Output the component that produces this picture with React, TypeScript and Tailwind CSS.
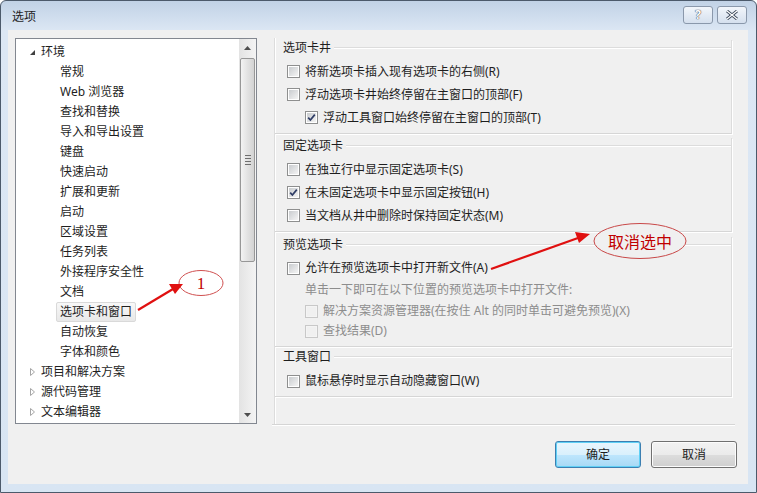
import React from "react";

const font = { fontFamily: '"Noto Sans", "Noto Sans CJK SC", sans-serif' };

type TreeItem = { label: string; level: 0 | 1; state?: "open" | "closed"; selected?: boolean };

const tree: TreeItem[] = [
  { label: "环境", level: 0, state: "open" },
  { label: "常规", level: 1 },
  { label: "Web 浏览器", level: 1 },
  { label: "查找和替换", level: 1 },
  { label: "导入和导出设置", level: 1 },
  { label: "键盘", level: 1 },
  { label: "快速启动", level: 1 },
  { label: "扩展和更新", level: 1 },
  { label: "启动", level: 1 },
  { label: "区域设置", level: 1 },
  { label: "任务列表", level: 1 },
  { label: "外接程序安全性", level: 1 },
  { label: "文档", level: 1 },
  { label: "选项卡和窗口", level: 1, selected: true },
  { label: "自动恢复", level: 1 },
  { label: "字体和颜色", level: 1 },
  { label: "项目和解决方案", level: 0, state: "closed" },
  { label: "源代码管理", level: 0, state: "closed" },
  { label: "文本编辑器", level: 0, state: "closed" },
];

const Expander = ({ state }: { state?: "open" | "closed" }) => {
  if (state === "open")
    return (
      <svg width="9" height="9" viewBox="0 0 9 9" className="shrink-0">
        <path d="M7 2 L7 7 L2 7 Z" fill="#404040" />
      </svg>
    );
  return (
    <svg width="9" height="10" viewBox="0 0 9 10" className="shrink-0">
      <path d="M2.5 1.5 L6.5 5 L2.5 8.5 Z" fill="#fff" stroke="#a6a6a6" />
    </svg>
  );
};

const Check = ({ checked, disabled }: { checked?: boolean; disabled?: boolean }) => (
  <span
    className={`relative flex h-[13px] w-[13px] shrink-0 items-center justify-center border ${
      disabled ? "border-[#c8c8c8] bg-[#f4f4f4]" : "border-[#8e8f8f] bg-white"
    }`}
  >
    <span
      className={`h-[9px] w-[9px] ${
        disabled ? "bg-[#f0f0f0]" : "bg-[linear-gradient(135deg,#c9cccf,#f4f4f4)]"
      }`}
    />
    {checked && (
      <svg width="11" height="11" viewBox="0 0 11 11" className="absolute left-[0px] top-[0px]">
        <path d="M2.2 5.6 L4.4 8 L8.8 2.6" fill="none" stroke="#2f3d66" strokeWidth="1.7" />
      </svg>
    )}
  </span>
);

const Option = ({
  label,
  checked,
  disabled,
  indent,
  h = "h-[23px]",
}: {
  label: string;
  checked?: boolean;
  disabled?: boolean;
  indent?: boolean;
  h?: string;
}) => (
  <div className={`flex items-center gap-[5px] ${h} ${indent ? "pl-[30px]" : "pl-[12px]"}`}>
    <Check checked={checked} disabled={disabled} />
    <span className={`text-[12px] ${disabled ? "text-[#8d8d8d]" : "text-[#1e1e1e]"}`}>{label}</span>
  </div>
);

const Group = ({
  title,
  className,
  children,
}: {
  title: string;
  className: string;
  children: React.ReactNode;
}) => (
  <div className={`mr-[3px] border-r border-b border-r-[#dcdcdc] border-b-[#d6d6d6] shadow-[1px_1px_0_#ffffff] ${className}`}>
    <div className="flex h-[16px] items-center">
      <span className="pl-[8px] pr-[3px] text-[12px] leading-[16px] text-[#1e1e1e]">{title}</span>
      <span className="h-[2px] flex-1 border-t border-b border-t-[#dcdcdc] border-b-white" />
    </div>
    {children}
  </div>
);

export default function App() {
  return (
    <div
      style={font}
      className="relative h-[493px] w-[757px] overflow-hidden rounded-t-[6px] border border-[#4c5a6b] bg-[linear-gradient(#c1d2e6,#dce7f4_30px,#d8e5f3)]"
    >
      {/* title bar */}
      <div className="flex h-[29px] items-center justify-between pl-[11px] pr-[9px]">
        <span className="pt-[2px] text-[12px] text-[#1e1e1e]">选项</span>
        <div className="mb-[2px] flex gap-[4px]">
          <div className="flex h-[18px] w-[30px] items-center justify-center rounded-[3px] border border-[#8a98ab] bg-[linear-gradient(#f2f6fb,#d5e0ee)] text-[12px] font-bold text-white [text-shadow:0_0_1px_#334,0_0_1px_#334]">
            ?
          </div>
          <div className="flex h-[18px] w-[30px] items-center justify-center rounded-[3px] border border-[#8a98ab] bg-[linear-gradient(#f2f6fb,#d5e0ee)]">
            <svg width="12" height="10" viewBox="0 0 12 10">
              <path d="M1 1 L11 9 M11 1 L1 9" stroke="#3d4a5c" strokeWidth="3" />
              <path d="M1 1 L11 9 M11 1 L1 9" stroke="#fff" strokeWidth="1.2" />
            </svg>
          </div>
        </div>
      </div>

      {/* client area */}
      <div className="ml-[7px] flex h-[454px] w-[740px] flex-col bg-[#f0f0f0]">
        <div className="flex h-[394px] pt-[8px]">
          {/* tree view */}
          <div className="ml-[7px] flex h-[386px] w-[242px] border border-[#828790] bg-white">
            <div className="flex-1 pt-[3px]">
              {tree.map((t) => (
                <div key={t.label} className="flex h-[20px] items-center">
                  {t.level === 0 ? (
                    <div className="flex items-center pl-[12px]">
                      <Expander state={t.state} />
                      <span className="pl-[4px] text-[12px] text-[#1e1e1e]">{t.label}</span>
                    </div>
                  ) : (
                    <div
                      className={`ml-[40px] flex h-[20px] items-center px-[3px] text-[12px] text-[#1e1e1e] ${
                        t.selected ? "rounded-[2px] border border-[#d9d9d9] bg-[linear-gradient(#f8f8f8,#e8e8e8)]" : "border border-transparent"
                      }`}
                    >
                      {t.label}
                    </div>
                  )}
                </div>
              ))}
            </div>
            {/* scrollbar */}
            <div className="flex w-[17px] flex-col bg-[linear-gradient(90deg,#e3e3e3,#f4f4f4)]">
              <div className="flex h-[17px] items-center justify-center">
                <svg width="7" height="4" viewBox="0 0 7 4">
                  <path d="M0 4 L3.5 0 L7 4 Z" fill="#4d4d4d" />
                </svg>
              </div>
              <div className="mx-[1px] mt-[2px] flex h-[204px] items-center justify-center rounded-[2px] border border-[#979797] bg-[linear-gradient(90deg,#f3f3f3,#e2e2e2_50%,#d3d3d3)]">
                <div className="flex flex-col gap-[2px]">
                  <span className="h-[1px] w-[6px] bg-[#6e6e6e]" />
                  <span className="h-[1px] w-[6px] bg-[#6e6e6e]" />
                  <span className="h-[1px] w-[6px] bg-[#6e6e6e]" />
                  <span className="h-[1px] w-[6px] bg-[#6e6e6e]" />
                </div>
              </div>
              <div className="flex-1" />
              <div className="flex h-[17px] items-center justify-center">
                <svg width="7" height="4" viewBox="0 0 7 4">
                  <path d="M0 0 L3.5 4 L7 0 Z" fill="#4d4d4d" />
                </svg>
              </div>
            </div>
          </div>

          {/* options panel */}
          <div className="ml-[17px] flex w-[461px] flex-col border-l border-l-[#dcdcdc] pt-[2px] shadow-[inset_1px_0_0_#ffffff]">
            <Group title="选项卡井" className="h-[94px]">
              <div className="pt-[4px]">
                <Option label="将新选项卡插入现有选项卡的右侧(R)" />
                <Option label="浮动选项卡井始终停留在主窗口的顶部(F)" />
                <Option label="浮动工具窗口始终停留在主窗口的顶部(T)" checked indent />
              </div>
            </Group>
            <Group title="固定选项卡" className="mt-[4px] h-[94px]">
              <div className="pt-[4px]">
                <Option label="在独立行中显示固定选项卡(S)" />
                <Option label="在未固定选项卡中显示固定按钮(H)" checked />
                <Option label="当文档从井中删除时保持固定状态(M)" />
              </div>
            </Group>
            <Group title="预览选项卡" className="mt-[5px] h-[110px]">
              <div className="pt-[4px]">
                <Option label="允许在预览选项卡中打开新文件(A)" h="h-[22px]" />
                <div className="flex h-[22px] items-center pl-[30px] text-[12px] text-[#8d8d8d]">
                  单击一下即可在以下位置的预览选项卡中打开文件:
                </div>
                <Option label="解决方案资源管理器(在按住 Alt 的同时单击可避免预览)(X)" disabled indent h="h-[20px]" />
                <Option label="查找结果(D)" disabled indent h="h-[20px]" />
              </div>
            </Group>
            <Group title="工具窗口" className="mt-[2px] h-[48px]">
              <div className="pt-[5px]">
                <Option label="鼠标悬停时显示自动隐藏窗口(W)" h="h-[22px]" />
              </div>
            </Group>
          </div>
        </div>

        {/* separator */}
        <div className="ml-[264px] mr-[13px] mt-[0px] h-[2px] border-t border-b border-t-[#d5d5d5] border-b-white" />

        {/* buttons */}
        <div className="flex justify-end gap-[10px] pr-[11px] pt-[15px]">
          <button className="flex h-[27px] w-[86px] items-center justify-center rounded-[3px] border border-[#3c7fb1] bg-[linear-gradient(#eaf6fd,#d9f0fc_50%,#bee6fd_51%,#a7d9f5)] text-[12px] text-[#1e1e1e] shadow-[inset_0_0_0_1px_#60d0f5]">
            确定
          </button>
          <button className="flex h-[27px] w-[86px] items-center justify-center rounded-[3px] border border-[#707070] bg-[linear-gradient(#f2f2f2,#ebebeb_50%,#dddddd_51%,#cfcfcf)] text-[12px] text-[#1e1e1e] shadow-[inset_0_0_0_1px_#fcfcfc]">
            取消
          </button>
        </div>
      </div>

      {/* annotations */}
      <svg className="pointer-events-none absolute left-0 top-0" width="757" height="493">
        <ellipse cx="200" cy="282" rx="22" ry="12.5" fill="#ffffff" stroke="#d05050" strokeWidth="1" />
        <ellipse cx="639" cy="240" rx="46" ry="17.5" fill="#f0f0f0" stroke="#c84848" strokeWidth="1" />
        <path d="M137 309 L172 288" stroke="#e01010" strokeWidth="2.2" />
        <path d="M182 283 L168 283 L174 293 Z" fill="#e01010" />
        <path d="M490 268 L577 237" stroke="#e01010" strokeWidth="2.2" />
        <path d="M589 233 L574 231 L578 242 Z" fill="#e01010" />
      </svg>
      <div className="pointer-events-none absolute left-[178px] top-[270px] flex h-[25px] w-[44px] items-center justify-center text-[17px] text-[#c00000] [font-family:'Liberation_Serif',serif]">
        1
      </div>
      <div className="pointer-events-none absolute left-[593px] top-[222px] flex h-[36px] w-[92px] items-center justify-center text-[16px] text-[#c00000] [font-family:'Noto_Sans_CJK_SC',sans-serif]">
        取消选中
      </div>
    </div>
  );
}
